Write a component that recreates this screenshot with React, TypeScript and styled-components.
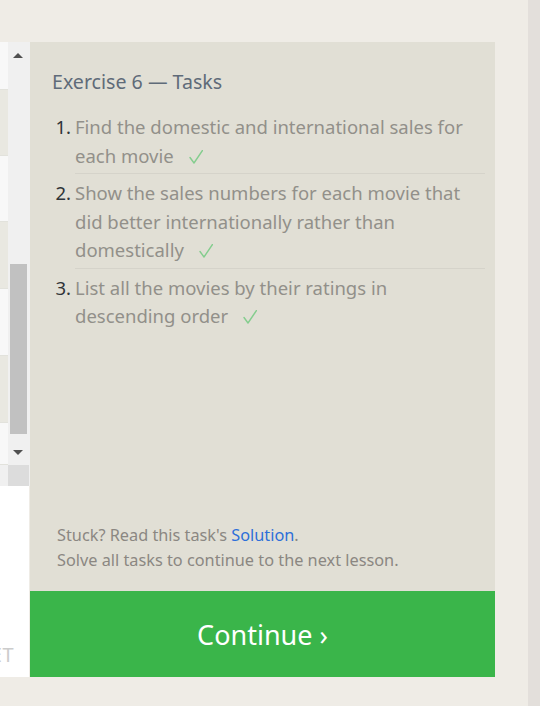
import React from "react";
import styled, { createGlobalStyle } from "styled-components";

const GlobalStyle = createGlobalStyle`
  html, body { margin: 0; padding: 0; }
  body {
    background: #efece6;
    font-family: "Noto Sans", "Open Sans", sans-serif;
  }
`;

const Page = styled.div`
  display: flex;
  width: 540px;
  height: 706px;
  overflow: hidden;
`;

const Main = styled.div`
  flex: 1;
  display: flex;
  padding: 42px 0 29px 0;
`;

const Strip = styled.div`
  width: 12px;
  background: #e3dfdb;
`;

const LeftPane = styled.div`
  width: 30px;
  display: flex;
  flex-direction: column;
  overflow: hidden;
`;

const TableArea = styled.div`
  display: flex;
  height: 423px;
`;

const Rows = styled.div`
  width: 8px;
  display: flex;
  flex-direction: column;
`;

const Row = styled.div<{ $h: number; $alt?: boolean }>`
  height: ${(p) => p.$h}px;
  background: ${(p) => (p.$alt ? "#e9e8e1" : "#f8f8f8")};
  border-bottom: 1px solid #e2e2dc;
  box-sizing: border-box;
`;

const VScroll = styled.div`
  width: 21px;
  background: #f0f0f0;
  display: flex;
  flex-direction: column;
  align-items: center;
  padding: 0 1px 10px 0;
  box-sizing: border-box;
`;

const Arrow = styled.div<{ $down?: boolean }>`
  width: 0;
  height: 0;
  border-left: 5px solid transparent;
  border-right: 5px solid transparent;
  ${(p) =>
    p.$down
      ? "border-top: 5px solid #505050; margin-top: 16px;"
      : "border-bottom: 5px solid #505050; margin-top: 11px;"}
`;

const ScrollSpacer = styled.div`
  flex: 1;
  width: 100%;
  display: flex;
  flex-direction: column;
  align-items: center;
  justify-content: flex-end;
`;

const Thumb = styled.div`
  width: 17px;
  height: 170px;
  background: #c1c1c1;
`;

const HScroll = styled.div`
  display: flex;
  height: 21px;
`;

const HTrack = styled.div`
  width: 8px;
  background: #f0f0f0;
`;

const Corner = styled.div`
  width: 21px;
  background: #dcdcdc;
`;

const Gap = styled.div`
  width: 1px;
  background: #f0f0f0;
`;

const WhiteArea = styled.div`
  flex: 1;
  background: #ffffff;
  display: flex;
  align-items: flex-end;
  justify-content: flex-end;
  padding: 0 15px 10px 0;
  margin-right: 1px;
  overflow: hidden;
`;

const ResetLabel = styled.span`
  font-family: "Noto Sans", sans-serif;
  font-size: 20px;
  line-height: 24px;
  color: #cccccc;
  white-space: nowrap;
  letter-spacing: 0.5px;
`;

const Panel = styled.div`
  width: 465px;
  background: #e1dfd5;
  display: flex;
  flex-direction: column;
`;

const Content = styled.div`
  flex: 1;
  padding: 28px 10px 0 22px;
  display: flex;
  flex-direction: column;
`;

const Title = styled.h2`
  margin: 0;
  font-size: 19.6px;
  line-height: 24px;
  font-weight: 400;
  color: #5f6b79;
`;

const TaskList = styled.ol`
  margin: 19px 0 0 0;
  padding: 0;
  list-style: none;
`;

const Task = styled.li`
  display: flex;
  margin-bottom: 5px;
`;

const Num = styled.span`
  width: 23px;
  flex: none;
  box-sizing: border-box;
  text-align: right;
  padding-right: 4px;
  font-size: 18.5px;
  line-height: 28.5px;
  color: #2f3438;
`;

const TaskBody = styled.div<{ $last?: boolean }>`
  flex: 1;
  padding: 0 20px 3px 0;
  font-size: 18.5px;
  line-height: 28.5px;
  color: #92908a;
  border-bottom: ${(p) => (p.$last ? "none" : "1px solid #d5d3ca")};
`;

const CheckIcon = styled.svg`
  display: inline-block;
  width: 14px;
  height: 14px;
  margin-left: 15px;
  vertical-align: -1px;
`;

const Footer = styled.div`
  margin-top: auto;
  padding: 0 0 18px 5px;
  font-size: 16.3px;
  line-height: 25px;
  color: #8b8782;
`;

const SolutionLink = styled.a`
  color: #2d6fd9;
  text-decoration: none;
`;

const ContinueButton = styled.button`
  height: 86px;
  border: none;
  background: #3ab54a;
  color: #ffffff;
  font-family: "Noto Sans", "Open Sans", sans-serif;
  font-size: 27px;
  cursor: pointer;
  padding: 0;
`;

const rows: { h: number; alt?: boolean }[] = [
  { h: 48 },
  { h: 66, alt: true },
  { h: 66 },
  { h: 67, alt: true },
  { h: 67 },
  { h: 67, alt: true },
  { h: 42 },
];

const tasks = [
  "Find the domestic and international sales for each movie",
  "Show the sales numbers for each movie that did better internationally rather than domestically",
  "List all the movies by their ratings in descending order",
];

const Check = () => (
  <CheckIcon viewBox="0 0 14 14" aria-hidden="true">
    <path
      d="M1 7.5 L5 13 L13.5 0.5"
      fill="none"
      stroke="#84cd8e"
      strokeWidth="1.4"
      strokeLinecap="round"
      strokeLinejoin="round"
    />
  </CheckIcon>
);

export default function App() {
  return (
    <>
      <GlobalStyle />
      <Page>
        <Main>
          <LeftPane>
            <TableArea>
              <Rows>
                {rows.map((r, i) => (
                  <Row key={i} $h={r.h} $alt={r.alt} />
                ))}
              </Rows>
              <VScroll>
                <Arrow />
                <ScrollSpacer>
                  <Thumb />
                </ScrollSpacer>
                <Arrow $down />
              </VScroll>
              <Gap />
            </TableArea>
            <HScroll>
              <HTrack />
              <Corner />
              <Gap />
            </HScroll>
            <WhiteArea>
              <ResetLabel>RESET</ResetLabel>
            </WhiteArea>
          </LeftPane>
          <Panel>
            <Content>
              <Title>Exercise 6 — Tasks</Title>
              <TaskList>
                {tasks.map((t, i) => (
                  <Task key={i}>
                    <Num>{i + 1}.</Num>
                    <TaskBody $last={i === tasks.length - 1}>
                      {t}
                      <Check />
                    </TaskBody>
                  </Task>
                ))}
              </TaskList>
              <Footer>
                Stuck? Read this task's <SolutionLink href="#">Solution</SolutionLink>.
                <br />
                Solve all tasks to continue to the next lesson.
              </Footer>
            </Content>
            <ContinueButton>Continue ›</ContinueButton>
          </Panel>
        </Main>
        <Strip />
      </Page>
    </>
  );
}
